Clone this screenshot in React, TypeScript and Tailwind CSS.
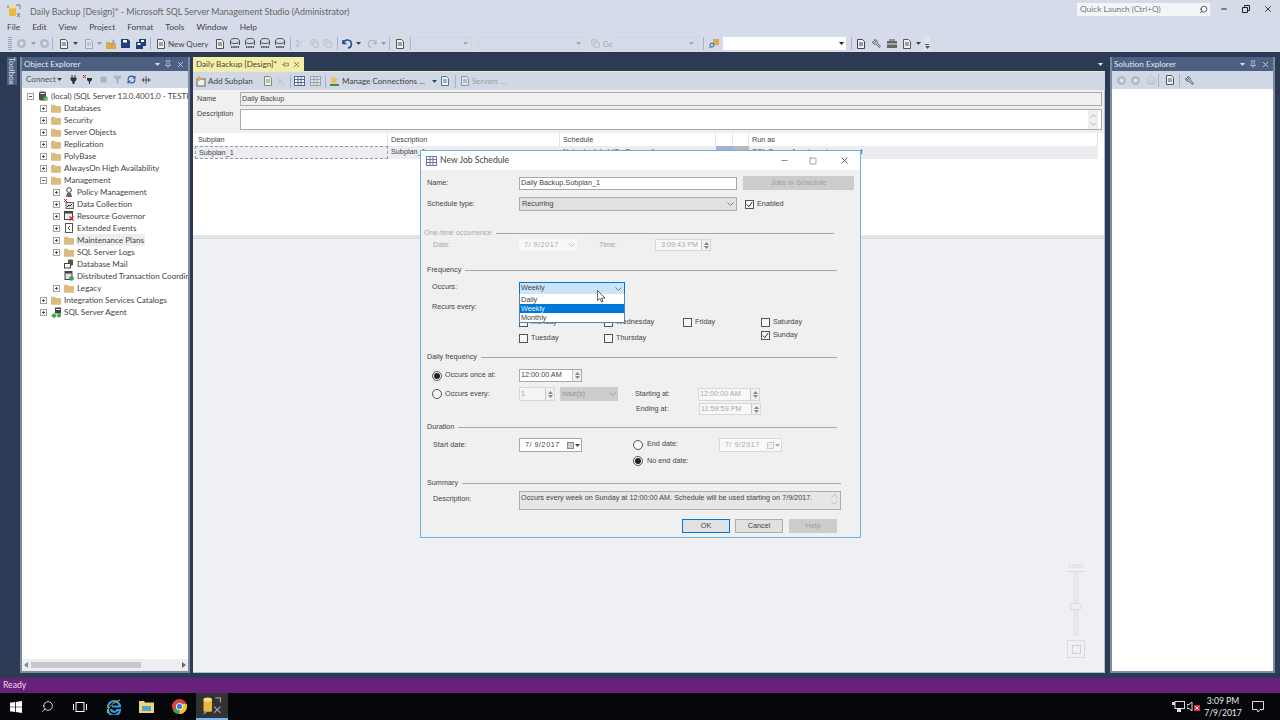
import type { ReactNode } from 'react'
import { Copy, Filter, Home, Minus, Pin, RefreshCw, Scissors, Search, Square, Wrench, X } from 'lucide-react'

// SSMS maintenance plan designer with the New Job Schedule dialog on top

function Caret({ className = '', color = '#444' }: { className?: string; color?: string }) {
  return (
    <svg width="5" height="3" viewBox="0 0 5 3" className={`shrink-0 ${className}`}>
      <path d="M0 0h5L2.5 3z" fill={color} />
    </svg>
  )
}

function Chevron({ className = '', color = '#777' }: { className?: string; color?: string }) {
  return (
    <svg width="7" height="4" viewBox="0 0 7 4" className={`shrink-0 ${className}`}>
      <path d="M.5.5l3 3 3-3" fill="none" stroke={color} />
    </svg>
  )
}

function Sep({ className = '' }: { className?: string }) {
  return <div className={`h-[13px] w-px shrink-0 bg-[#a9b2c6] ${className}`} />
}

function Circle({ className = '' }: { className?: string }) {
  return (
    <svg width="9" height="9" viewBox="0 0 9 9" className={`shrink-0 ${className}`}>
      <circle cx="4.5" cy="4.5" r="4.5" fill="#b4b9c4" />
      <circle cx="4.5" cy="4.5" r="2" fill="#dfe2ea" />
    </svg>
  )
}

function DocIcon({ className = '', color = '#555' }: { className?: string; color?: string }) {
  return (
    <svg width="10" height="10" viewBox="0 0 10 10" className={`shrink-0 ${className}`}>
      <path d="M1.5.5h5l2 2v7h-7z" fill="#eef0f4" stroke={color} />
      <path d="M3 4h4M3 6h4" stroke={color} />
    </svg>
  )
}

function DbQueryIcon({ className = '' }: { className?: string }) {
  return (
    <svg width="10" height="11" viewBox="0 0 10 11" className={`shrink-0 ${className}`}>
      <ellipse cx="5" cy="3" rx="4.5" ry="2.5" fill="none" stroke="#555" />
      <path d="M.5 3v4M9.5 3v4" stroke="#555" />
      <path d="M1 9h8" stroke="#555" strokeWidth="2" strokeDasharray="1.5 .7" />
    </svg>
  )
}

function FolderIcon() {
  return (
    <svg width="10" height="9" viewBox="0 0 10 9" className="shrink-0">
      <path d="M0 1.5A.7.7 0 0 1 .7.8h3l1 1.2h4.6a.7.7 0 0 1 .7.7V8a.7.7 0 0 1-.7.7H.7A.7.7 0 0 1 0 8z" fill="#dcbb7e" />
    </svg>
  )
}

function Toggle({ open }: { open?: boolean }) {
  return (
    <svg width="7" height="7" viewBox="0 0 7 7" className="shrink-0">
      <rect x=".5" y=".5" width="6" height="6" fill="#fff" stroke="#a0a0a0" />
      <path d="M2 3.5h3" stroke="#555" />
      {!open && <path d="M3.5 2v3" stroke="#555" />}
    </svg>
  )
}

function ServerIcon() {
  return (
    <svg width="10" height="10" viewBox="0 0 10 10" className="shrink-0">
      <rect x="1" y=".5" width="7" height="9" rx="1.5" fill="#4a4f55" />
      <rect x="2.5" y="2" width="4" height="1" fill="#fff" />
      <circle cx="7.5" cy="7.5" r="2.3" fill="#3aa648" />
      <path d="M6.5 7.5l1 1 1.2-1.5" stroke="#fff" strokeWidth=".7" fill="none" />
    </svg>
  )
}

function TreeGlyph({ kind }: { kind: string }) {
  if (kind === 'folder') return <FolderIcon />
  if (kind === 'policy')
    return (
      <svg width="10" height="11" viewBox="0 0 10 11" className="shrink-0">
        <circle cx="5" cy="3" r="2.4" fill="none" stroke="#444" />
        <path d="M3 6l-1 4h6L7 6z" fill="#666" />
      </svg>
    )
  if (kind === 'collect')
    return (
      <svg width="10" height="10" viewBox="0 0 10 10" className="shrink-0">
        <path d="M0 0l3 3M3 0L0 3" stroke="#d22" />
        <rect x="2" y="3.5" width="7.5" height="6" fill="#ddd" stroke="#666" />
        <path d="M3 8l2-2 1 1 2-2" stroke="#333" fill="none" />
      </svg>
    )
  if (kind === 'gov')
    return (
      <svg width="10" height="10" viewBox="0 0 10 10" className="shrink-0">
        <rect x=".5" y=".5" width="8" height="8" fill="#eee" stroke="#444" />
        <rect x=".5" y=".5" width="8" height="2" fill="#444" />
        <path d="M5.5 5.5l4 4M9.5 5.5l-4 4" stroke="#d22" strokeWidth="1.2" />
      </svg>
    )
  if (kind === 'events')
    return (
      <svg width="10" height="10" viewBox="0 0 10 10" className="shrink-0">
        <rect x="1.5" y=".5" width="7" height="9" fill="#fff" stroke="#555" />
        <path d="M6 3L4 5l2 2" stroke="#444" fill="none" />
      </svg>
    )
  if (kind === 'mail')
    return (
      <svg width="10" height="10" viewBox="0 0 10 10" className="shrink-0">
        <rect x="4" y=".5" width="5" height="6" rx="1" fill="#555" />
        <rect x=".5" y="4.5" width="6" height="4.5" fill="#fff" stroke="#444" />
      </svg>
    )
  if (kind === 'dtc')
    return (
      <svg width="10" height="10" viewBox="0 0 10 10" className="shrink-0">
        <rect x="1" y=".5" width="7" height="8" fill="#ddd" stroke="#444" />
        <rect x="1" y=".5" width="7" height="2" fill="#444" />
        <circle cx="7.5" cy="7.5" r="2.3" fill="#3aa648" />
      </svg>
    )
  if (kind === 'agent')
    return (
      <svg width="11" height="11" viewBox="0 0 11 11" className="shrink-0">
        <rect x="4" y=".5" width="6" height="6" fill="#444" />
        <rect x="5" y="2" width="4" height="1" fill="#fff" />
        <path d="M0 9l3-3 3 3-3 2z" fill="#4a4" />
        <circle cx="8" cy="8.5" r="2" fill="#3aa648" />
      </svg>
    )
  return <ServerIcon />
}

const TREE = [
  { label: '(local) (SQL Server 13.0.4001.0 - TESTPC', level: 0, icon: 'server', toggle: 'open' },
  { label: 'Databases', level: 1, icon: 'folder', toggle: 'closed' },
  { label: 'Security', level: 1, icon: 'folder', toggle: 'closed' },
  { label: 'Server Objects', level: 1, icon: 'folder', toggle: 'closed' },
  { label: 'Replication', level: 1, icon: 'folder', toggle: 'closed' },
  { label: 'PolyBase', level: 1, icon: 'folder', toggle: 'closed' },
  { label: 'AlwaysOn High Availability', level: 1, icon: 'folder', toggle: 'closed' },
  { label: 'Management', level: 1, icon: 'folder', toggle: 'open' },
  { label: 'Policy Management', level: 2, icon: 'policy', toggle: 'closed' },
  { label: 'Data Collection', level: 2, icon: 'collect', toggle: 'closed' },
  { label: 'Resource Governor', level: 2, icon: 'gov', toggle: 'closed' },
  { label: 'Extended Events', level: 2, icon: 'events', toggle: 'closed' },
  { label: 'Maintenance Plans', level: 2, icon: 'folder', toggle: 'closed', selected: true },
  { label: 'SQL Server Logs', level: 2, icon: 'folder', toggle: 'closed' },
  { label: 'Database Mail', level: 2, icon: 'mail', toggle: 'none' },
  { label: 'Distributed Transaction Coordinator', level: 2, icon: 'dtc', toggle: 'none' },
  { label: 'Legacy', level: 2, icon: 'folder', toggle: 'closed' },
  { label: 'Integration Services Catalogs', level: 1, icon: 'folder', toggle: 'closed' },
  { label: 'SQL Server Agent', level: 1, icon: 'agent', toggle: 'closed' },
]

const LEVEL_PAD = ['pl-[5px]', 'pl-[18px]', 'pl-[31px]']

function TitleBar() {
  return (
    <div className="flex h-[20px] shrink-0 items-center">
      <svg width="14" height="14" viewBox="0 0 14 14" className="mt-[2px] ml-[7px] shrink-0">
        <rect x="2" y="3" width="7" height="9" rx="1" fill="#e8b93c" />
        <ellipse cx="5.5" cy="3" rx="3.5" ry="1.5" fill="#f6dc8a" />
        <path d="M9 1h4v4M1 1v3M10 9l3 4M13 9l-3 4" stroke="#777" fill="none" />
      </svg>
      <span className="mt-[3px] ml-[9px] text-[8.85px] text-[#666]">
        Daily Backup [Design]* - Microsoft SQL Server Management Studio (Administrator)
      </span>
      <div className="mb-[2px] ml-auto flex h-[13px] w-[133px] items-center justify-between bg-[#f4f5f9] pr-[2px] pl-[3px]">
        <span className="text-[8.3px] text-[#777]">Quick Launch (Ctrl+Q)</span>
        <Search size={9} className="-scale-x-100 text-[#333]" />
      </div>
      <Minus size={8} strokeWidth={3} className="mb-[2px] ml-[10px] text-[#222]" />
      <svg width="8" height="8" viewBox="0 0 8 8" className="mb-[2px] ml-[14px]">
        <path d="M2.5 2V.5h5v5H6M.5 2.5h5v5h-5z" fill="none" stroke="#222" />
      </svg>
      <X size={10} className="mr-[7px] mb-[2px] ml-[13px] text-[#222]" />
    </div>
  )
}

function MenuBar() {
  const items = ['File', 'Edit', 'View', 'Project', 'Format', 'Tools', 'Window', 'Help']
  return (
    <div className="flex h-[15px] shrink-0 items-center gap-[12px] pl-[7px] text-[8.4px] text-[#444]">
      {items.map((m) => (
        <span key={m}>{m}</span>
      ))}
    </div>
  )
}

function MainToolbar() {
  return (
    <div className="flex h-[17px] shrink-0 items-center text-[8px] text-[#444]">
      <div className="ml-[8px] h-[13px] w-[4px] shrink-0 bg-[repeating-linear-gradient(0deg,#9aa3b5_0,#9aa3b5_1px,transparent_1px,transparent_2px)]" />
      <Circle className="ml-[5px]" />
      <Caret className="ml-[5px]" color="#999" />
      <Circle className="ml-[4px]" />
      <Sep className="ml-[3px]" />
      <DocIcon className="ml-[6px]" />
      <Caret className="ml-[4px]" />
      <DocIcon className="ml-[6px] opacity-40" />
      <Caret className="ml-[3px]" color="#999" />
      <svg width="10" height="10" viewBox="0 0 10 10" className="ml-[4px] shrink-0">
        <path d="M0 3h4l1 1h5v6H0z" fill="#d9a94e" />
        <path d="M6 .5l2 2-2 2" stroke="#2a6fb5" fill="none" />
      </svg>
      <svg width="9" height="9" viewBox="0 0 9 9" className="ml-[5px] shrink-0">
        <path d="M0 0h7l2 2v7H0z" fill="#1f3f7a" />
        <rect x="2" y="1" width="4" height="2.5" fill="#fff" />
      </svg>
      <svg width="10" height="10" viewBox="0 0 10 10" className="ml-[6px] shrink-0">
        <path d="M3 0h7v7H7v3H0V3h3z" fill="#1f3f7a" />
        <rect x="1.5" y="4" width="3" height="2" fill="#fff" />
        <rect x="5" y="1" width="3" height="2" fill="#fff" />
      </svg>
      <Sep className="ml-[4px]" />
      <DocIcon className="ml-[5px]" />
      <span className="ml-[2px] w-[40px] shrink-0 whitespace-nowrap">New Query</span>
      <DocIcon className="ml-[7px]" />
      <DbQueryIcon className="ml-[5px]" />
      <DbQueryIcon className="ml-[5px]" />
      <DbQueryIcon className="ml-[5px]" />
      <DbQueryIcon className="ml-[5px]" />
      <Sep className="ml-[5px]" />
      <Scissors size={9} className="ml-[4px] shrink-0 text-[#b0b5bf]" />
      <Copy size={9} className="ml-[6px] shrink-0 text-[#b0b5bf]" />
      <Copy size={9} className="ml-[4px] shrink-0 text-[#b0b5bf]" />
      <Sep className="ml-[5px]" />
      <svg width="11" height="10" viewBox="0 0 11 10" className="ml-[4px] shrink-0">
        <path d="M1 1v3.5h3.5M1.5 4.2A4 4 0 1 1 6 9" fill="none" stroke="#1f4f96" strokeWidth="1.6" />
      </svg>
      <Caret className="ml-[3px]" />
      <svg width="10" height="10" viewBox="0 0 11 10" className="ml-[6px] shrink-0">
        <path d="M10 1v3.5H6.5M9.5 4.2A4 4 0 1 0 5 9" fill="none" stroke="#b0b5bf" strokeWidth="1.4" />
      </svg>
      <Caret className="ml-[4px]" color="#999" />
      <Sep className="ml-[3px]" />
      <DocIcon className="ml-[5px]" />
      <Sep className="ml-[5px]" />
      <div className="ml-[3px] flex h-[13px] w-[58px] shrink-0 items-center justify-end border border-[#cfd5e2] pr-[3px]">
        <Caret color="#aaa" />
      </div>
      <div className="ml-[6px] flex h-[13px] w-[107px] shrink-0 items-center justify-end border border-[#cfd5e2] pr-[3px]">
        <Caret color="#aaa" />
      </div>
      <Copy size={9} className="ml-[6px] shrink-0 text-[#a8aeba]" />
      <span className="ml-[3px] w-[9px] shrink-0 overflow-hidden text-[#a0a5b0]">Go</span>
      <div className="flex h-[13px] w-[86px] shrink-0 items-center justify-end border border-[#cfd5e2] pr-[3px]">
        <Caret color="#aaa" />
      </div>
      <Sep className="ml-[5px]" />
      <svg width="10" height="10" viewBox="0 0 10 10" className="ml-[5px] shrink-0">
        <rect x="4" y="0" width="6" height="6" fill="#dfa94f" />
        <circle cx="3" cy="6" r="2" fill="none" stroke="#2a5fa5" />
        <path d="M1.5 7.5L0 9.5" stroke="#2a5fa5" />
      </svg>
      <div className="ml-[4px] flex h-[13px] w-[123px] shrink-0 items-center justify-end bg-white pr-[2px]">
        <Caret color="#222" />
      </div>
      <Sep className="ml-[5px]" />
      <DocIcon className="ml-[4px]" color="#4a3a6a" />
      <Wrench size={9} className="ml-[6px] shrink-0 -scale-x-100 text-[#333]" />
      <svg width="10" height="9" viewBox="0 0 10 9" className="ml-[6px] shrink-0">
        <rect x="0" y="2" width="10" height="7" fill="#666" />
        <rect x="3" y="0" width="4" height="2" fill="none" stroke="#666" />
        <rect x="0" y="4.5" width="10" height="1" fill="#ddd" />
      </svg>
      <DocIcon className="ml-[5px]" />
      <Caret className="ml-[4px]" />
      <div className="ml-[3px] flex h-[15px] w-[6px] shrink-0 flex-col items-center justify-end bg-[#e0e4ee] pb-[2px]">
        <div className="mb-px h-px w-[4px] bg-[#555]" />
        <Caret color="#555" />
      </div>
    </div>
  )
}

function PanelHeader({ title }: { title: string }) {
  return (
    <div className="flex h-[14px] shrink-0 items-center justify-between bg-[#4d6082] pr-[3px] pl-[2px] text-[8.2px] text-[#e6e9f0]">
      <span>{title}</span>
      <span className="flex items-center gap-[4px]">
        <Caret color="#dfe3ec" />
        <Pin size={8} className="text-[#dfe3ec]" />
        <X size={9} className="text-[#dfe3ec]" />
      </span>
    </div>
  )
}

function ObjectExplorer() {
  return (
    <div className="ml-[3px] flex w-[170px] shrink-0 flex-col border-x-2 border-b-2 border-[#7f8ba3] bg-white">
      <PanelHeader title="Object Explorer" />
      <div className="flex h-[17px] shrink-0 items-center bg-[#d0d7e5] pl-[4px] text-[8.1px] text-[#555]">
        <span className="w-[30px] shrink-0">Connect</span>
        <Caret className="ml-[1px]" />
        <svg width="7" height="9" viewBox="0 0 7 9" className="ml-[8px] shrink-0">
          <path d="M1 3h5v2L4 7v2H3V7L1 5zM2 0v3M5 0v3" fill="#333" stroke="#333" />
        </svg>
        <svg width="10" height="9" viewBox="0 0 10 9" className="ml-[6px] shrink-0">
          <path d="M4 3h5v2L7 7v2H6V7L4 5z" fill="#333" />
          <path d="M0 0l3 3M3 0L0 3" stroke="#c22" />
        </svg>
        <Square size={7} className="ml-[7px] shrink-0 fill-[#aeb3be] text-[#aeb3be]" />
        <Filter size={9} className="ml-[6px] shrink-0 fill-[#aeb3be] text-[#aeb3be]" />
        <RefreshCw size={9} strokeWidth={3} className="ml-[5px] shrink-0 text-[#2a5a9a]" />
        <svg width="10" height="8" viewBox="0 0 10 8" className="ml-[5px] shrink-0">
          <path d="M0 4h10M5 0v8M2.5 2v4M7.5 2v4" stroke="#555" />
        </svg>
      </div>
      <div className="min-h-0 flex-1 overflow-hidden pt-[2px] text-[8.1px] text-[#444]">
        {TREE.map((t) => (
          <div key={t.label} className={`flex h-[12px] items-center whitespace-nowrap ${LEVEL_PAD[t.level]}`}>
            {t.toggle === 'none' ? <span className="w-[7px] shrink-0" /> : <Toggle open={t.toggle === 'open'} />}
            <span className="ml-[4px] flex w-[10px] shrink-0 items-center">
              <TreeGlyph kind={t.icon} />
            </span>
            <span className={`ml-[2px] px-[1px] ${t.selected ? 'bg-[#eeeeee]' : ''}`}>{t.label}</span>
          </div>
        ))}
      </div>
      <div className="flex h-[12px] shrink-0 items-center justify-between bg-[#eeeef2] px-[2px]">
        <svg width="4" height="6" viewBox="0 0 4 6"><path d="M4 0v6L0 3z" fill="#888" /></svg>
        <div className="mr-[41px] ml-[3px] h-[6px] flex-1 bg-[#c8c8cc]" />
        <svg width="4" height="6" viewBox="0 0 4 6"><path d="M0 0v6l4-3z" fill="#666" /></svg>
      </div>
    </div>
  )
}

function GridCol({ w, children }: { w: string; children?: ReactNode }) {
  return <div className={`h-full shrink-0 overflow-hidden border-r border-[#e2e2e2] pl-[3px] ${w}`}>{children}</div>
}

function Designer() {
  return (
    <div className="ml-[3px] flex w-[912px] shrink-0 flex-col">
      <div className="flex h-[14px] shrink-0 items-center">
        <div className="flex h-full w-[111px] items-center bg-[#f5efa6] pl-[3px] text-[8.1px] whitespace-nowrap text-[#444]">
          <span className="w-[80px] shrink-0">Daily Backup [Design]*</span>
          <Pin size={7} className="ml-[6px] rotate-90 text-[#555]" />
          <X size={9} className="ml-[3px] text-[#555]" />
        </div>
        <Caret className="mr-[2px] ml-auto" color="#dfe3ec" />
      </div>
      <div className="h-[1px] shrink-0 bg-[#eeeac0]" />
      <div className="flex h-[18px] shrink-0 items-center bg-[#d0d7e5] pl-[3px] text-[8.1px] text-[#444]">
        <svg width="11" height="11" viewBox="0 0 11 11" className="shrink-0">
          <rect x="1" y="3" width="8" height="7" fill="#eee" stroke="#666" />
          <path d="M3 0v5M.5 2.500h5" stroke="#d9a94e" strokeWidth="1.5" />
        </svg>
        <span className="ml-[1px] w-[45px] shrink-0 whitespace-nowrap">Add Subplan</span>
        <DocIcon className="ml-[10px]" color="#7a8a6a" />
        <X size={11} className="ml-[2px] shrink-0 text-[#b0b5bf]" />
        <Sep className="ml-[4px]" />
        <svg width="11" height="10" viewBox="0 0 11 10" className="ml-[3px] shrink-0">
          <rect x=".5" y=".5" width="10" height="9" fill="#fff" stroke="#4a6aa0" />
          <path d="M.5 3.500h10M.5 6.500h10M4 .5v9M7 .5v9" stroke="#4a6aa0" />
        </svg>
        <svg width="11" height="10" viewBox="0 0 11 10" className="ml-[5px] shrink-0 opacity-40">
          <rect x=".5" y=".5" width="10" height="9" fill="#fff" stroke="#555" />
          <path d="M.5 3.500h10M.5 6.500h10M4 .5v9M7 .5v9" stroke="#555" />
        </svg>
        <Sep className="ml-[4px]" />
        <svg width="11" height="11" viewBox="0 0 11 11" className="ml-[3px] shrink-0">
          <path d="M1 8h9v2H1z" fill="#3a8a4a" />
          <path d="M5 0l1.500 2.500L9 3 7 5l.5 3-2.500-1.500L2.500 8 3 5 1 3l2.500-.5z" fill="#e6c050" />
        </svg>
        <span className="ml-[2px] w-[84px] shrink-0 whitespace-nowrap">Manage Connections ...</span>
        <Caret className="ml-[6px]" />
        <DocIcon className="ml-[3px]" color="#4a7aa0" />
        <Sep className="ml-[5px]" />
        <DocIcon className="ml-[4px] opacity-50" />
        <span className="ml-[2px] text-[#9a9fa8]">Servers ...</span>
      </div>
      <div className="flex min-h-0 flex-1 flex-col border-r border-b border-[#a8c4cc] bg-white">
        <div className="shrink-0 bg-[#f0f0f0] pt-[2px] pr-[2px] pb-[3px] pl-[4px] text-[7.25px] text-[#444] [font-family:'Liberation_Sans',sans-serif]">
          <div className="flex h-[14px] items-center">
            <span className="w-[43px] shrink-0">Name</span>
            <div className="flex h-full flex-1 items-center border border-[#aaaaaa] pl-[1px]">Daily Backup</div>
          </div>
          <div className="mt-[3px] flex h-[21px]">
            <span className="w-[43px] shrink-0">Description</span>
            <div className="flex h-full flex-1 items-center justify-end border border-[#aaaaaa] bg-white pr-[3px]">
              <div className="flex h-full w-[10px] flex-col items-center justify-center gap-[4px] bg-[#eeeeee]">
                <Chevron className="rotate-180" color="#bbb" />
                <Chevron color="#bbb" />
              </div>
            </div>
          </div>
        </div>
        <div className="flex h-[13px] shrink-0 pl-[2px] text-[7.25px] leading-[13px] text-[#444] [font-family:'Liberation_Sans',sans-serif]">
          <GridCol w="w-[193px]">Subplan</GridCol>
          <GridCol w="w-[172px]">Description</GridCol>
          <GridCol w="w-[156px]">Schedule</GridCol>
          <GridCol w="w-[17px]" />
          <GridCol w="w-[16px]" />
          <GridCol w="w-[349px]">Run as</GridCol>
        </div>
        <div className="flex h-[13px] w-[905px] shrink-0 bg-[#ebedf0] pl-[2px] text-[7.25px] leading-[11px] text-[#444] [font-family:'Liberation_Sans',sans-serif]">
          <div className="h-full w-[193px] shrink-0 border border-dashed border-[#9a9a9a] pl-[3px]">Subplan_1</div>
          <div className="h-full w-[172px] shrink-0 pl-[3px]">Subplan_1</div>
          <div className="h-full w-[156px] shrink-0 pl-[3px] whitespace-nowrap">Not scheduled (On Demand)</div>
          <div className="h-full w-[17px] shrink-0 bg-[#9fb4d4]" />
          <div className="h-full w-[16px] shrink-0 bg-[#b8b8bc]" />
          <div className="h-full pl-[3px] whitespace-nowrap">SQL Server Agent service account</div>
        </div>
        <div className="min-h-0 flex-1" />
        <div className="h-[4px] shrink-0 border-b border-[#cde0e4] bg-[#e4e4e4]" />
        <div className="flex h-[433px] shrink-0 flex-col items-end bg-[#eef0f3] pt-[323px] pr-[19px]">
          <div className="flex w-[18px] flex-col items-center text-[6px] text-[#d4d4d7] [font-family:'Liberation_Sans',sans-serif]">
            <span>100%</span>
            <div className="h-px w-full bg-[#dcdcdf]" />
            <div className="relative flex h-[64px] w-[6px] justify-center bg-[#e6e7ea]">
              <div className="absolute top-[31px] left-[-3px] h-[7px] w-[12px] rounded-r-full border border-[#d8d8dc] bg-[#eef0f3]" />
            </div>
            <div className="mt-[4px] flex h-[18px] w-[18px] items-center justify-center border border-[#dcdce0]">
              <div className="h-[9px] w-[9px] border border-[#d0d0d4]" />
            </div>
          </div>
        </div>
      </div>
    </div>
  )
}

function SolutionExplorer() {
  return (
    <div className="ml-[5px] flex w-[165px] shrink-0 flex-col border-x-2 border-b-2 border-[#7f8ba3] bg-white">
      <PanelHeader title="Solution Explorer" />
      <div className="flex h-[18px] shrink-0 items-center bg-[#d0d7e5] pl-[5px]">
        <Circle />
        <Circle className="ml-[5px]" />
        <Home size={10} className="ml-[6px] shrink-0 text-[#b4b9c4]" />
        <Sep className="ml-[2px]" />
        <DocIcon className="ml-[6px]" />
        <Sep className="ml-[4px]" />
        <Wrench size={9} className="ml-[5px] -scale-x-100 text-[#333]" />
      </div>
    </div>
  )
}

function Spin() {
  return (
    <div className="flex h-full w-[9px] shrink-0 flex-col items-center justify-center gap-[1px] border-l border-[#c8c8c8] bg-[#f0f0f0]">
      <Caret className="rotate-180" color="#888" />
      <Caret color="#888" />
    </div>
  )
}

function CheckBox({ checked }: { checked?: boolean }) {
  return (
    <div className="flex h-[9px] w-[9px] shrink-0 items-center justify-center border border-[#555] bg-[#f8f8f8]">
      {checked && (
        <svg width="7" height="7" viewBox="0 0 7 7">
          <path d="M.8 3.500l2 2.200L6.200 1" fill="none" stroke="#333" />
        </svg>
      )}
    </div>
  )
}

function Radio({ checked }: { checked?: boolean }) {
  return (
    <div className="flex h-[10px] w-[10px] shrink-0 items-center justify-center rounded-full border border-[#555] bg-[#f8f8f8]">
      {checked && <div className="h-[6px] w-[6px] rounded-full bg-[#222]" />}
    </div>
  )
}

function GroupTitle({ title, className = '', muted, end = 'mr-[23px]' }: { title: string; className?: string; muted?: boolean; end?: string }) {
  return (
    <div className={`flex h-[12px] items-center ${end} ${className}`}>
      <span className={muted ? 'text-[#a8a8a8]' : ''}>{title}</span>
      <div className="ml-[4px] h-px flex-1 bg-[#a8a8a8]" />
    </div>
  )
}

function Day({ label, checked, className = '' }: { label: string; checked?: boolean; className?: string }) {
  return (
    <div className={`flex items-center ${className}`}>
      <CheckBox checked={checked} />
      <span className="ml-[3px]">{label}</span>
    </div>
  )
}

function JobScheduleDialog() {
  return (
    <div className="absolute top-[150px] left-[420px] flex h-[388px] w-[441px] flex-col border border-[#6fb2d8] bg-[#f0f0f0] text-[7.25px] whitespace-nowrap text-[#444] [font-family:'Liberation_Sans',sans-serif]">
      <div className="flex h-[19px] shrink-0 items-center bg-white pl-[5px] text-[8.6px] text-[#444] [font-family:'Lato',sans-serif]">
        <svg width="11" height="10" viewBox="0 0 11 10" className="shrink-0">
          <rect x=".5" y=".5" width="10" height="9" fill="#fff" stroke="#6a7aa0" />
          <path d="M.5 3.500h10M.5 6.500h10M4 .5v9M7 .5v9" stroke="#6a7aa0" />
        </svg>
        <span className="ml-[3px]">New Job Schedule</span>
        <Minus size={9} className="ml-auto text-[#666]" />
        <Square size={8} className="ml-[20px] text-[#777]" />
        <X size={11} className="mr-[10px] ml-[22px] text-[#555]" />
      </div>

      <div className="mt-[6px] flex h-[14px] items-center pl-[6px]">
        <span className="w-[92px] shrink-0">Name:</span>
        <div className="flex h-[13px] w-[218px] items-center border border-[#a8a8a8] bg-white pl-[1px]">Daily Backup.Subplan_1</div>
        <div className="ml-[6px] flex h-full w-[111px] items-center justify-center bg-[#cccccc] text-[#a0a0a0]">Jobs in Schedule</div>
      </div>

      <div className="mt-[7px] flex h-[14px] items-center pl-[6px]">
        <span className="w-[92px] shrink-0">Schedule type:</span>
        <div className="flex h-full w-[218px] items-center justify-between border border-[#adadad] bg-[#e1e1e1] px-[2px]">
          <span>Recurring</span>
          <Chevron />
        </div>
        <div className="ml-[8px]">
          <Day label="Enabled" checked />
        </div>
      </div>

      <GroupTitle title="One-time occurrence" muted end="mr-[26px]" className="mt-[16px] pl-[3px]" />
      <div className="flex h-[12px] items-center pl-[12px] text-[#a8a8a8]">
        <span className="w-[86px] shrink-0">Date:</span>
        <div className="flex h-[12px] w-[58px] items-center justify-between bg-[#f8f8f8] pr-[2px] pl-[5px]">
          <span className="tracking-[0.5px]">7/ 9/2017</span>
          <Chevron color="#bbb" />
        </div>
        <span className="ml-[22px] w-[56px] shrink-0">Time:</span>
        <div className="flex h-[12px] w-[56px] items-center justify-between border border-[#d8d8d8] bg-[#f8f8f8] pl-[5px]">
          <span>3:09:43 PM</span>
          <Spin />
        </div>
      </div>

      <GroupTitle title="Frequency" className="mt-[13px] pl-[6px]" />

      <div className="mt-[6px] flex h-[13px] items-center pl-[11px]">
        <span className="-mt-[3px] w-[87px] shrink-0">Occurs:</span>
        <div className="relative flex h-full w-[106px] items-center justify-between border border-[#0078d7] bg-[#cce4f7] pr-[2px] pl-[1px]">
          <span>Weekly</span>
          <Chevron />
          <div className="absolute top-full -left-px flex w-[106px] flex-col border border-t-0 border-[#4f86b5] bg-white pt-[1px] leading-[10px]">
            <span className="h-[9px] pl-[1px]">Daily</span>
            <span className="h-[9px] bg-[#0078d7] pl-[1px] text-[#eaf4fc]">Weekly</span>
            <span className="h-[9px] pl-[1px]">Monthly</span>
          </div>
          <svg width="9" height="13" viewBox="0 0 9 13" className="absolute top-[7px] left-[77px] z-10">
            <path d="M.5.5v10l2.500-2 1.500 3.500 1.500-.6L4.500 8H8z" fill="#fff" stroke="#222" strokeWidth=".7" />
          </svg>
        </div>
      </div>
      <div className="mt-[6px] h-[12px] pl-[11px] leading-[12px]">Recurs every:</div>

      <div className="mt-[3px] flex h-[12px] items-center pl-[98px]">
        <Day label="Monday" className="w-[85px]" />
        <Day label="Wednesday" className="w-[79px]" />
        <Day label="Friday" className="w-[78px]" />
        <Day label="Saturday" />
      </div>
      <div className="mt-px flex h-[16px] items-start pl-[98px]">
        <Day label="Tuesday" className="mt-[4px] w-[85px]" />
        <Day label="Thursday" className="mt-[4px] w-[157px]" />
        <Day label="Sunday" className="mt-px" checked />
      </div>

      <GroupTitle title="Daily frequency" className="mt-[6px] pl-[6px]" />

      <div className="mt-[6px] flex h-[13px] items-center pl-[11px]">
        <Radio checked />
        <span className="ml-[3px] w-[74px] shrink-0">Occurs once at:</span>
        <div className="flex h-full w-[63px] items-center justify-between border border-[#a8a8a8] bg-white pl-[1px]">
          <span>12:00:00 AM</span>
          <Spin />
        </div>
      </div>
      <div className="mt-[5px] flex h-[14px] items-center pl-[11px]">
        <Radio />
        <span className="ml-[3px] w-[74px] shrink-0">Occurs every:</span>
        <div className="flex h-full w-[36px] items-center justify-between border border-[#d8d8d8] bg-[#f4f4f4] pl-[1px] text-[#a8a8a8]">
          <span>1</span>
          <Spin />
        </div>
        <div className="ml-[5px] flex h-full w-[58px] items-center justify-between bg-[#cccccc] px-[2px] text-[#909090]">
          <span>hour(s)</span>
          <Chevron color="#999" />
        </div>
        <span className="ml-[17px] w-[63px] shrink-0">Starting at:</span>
        <div className="flex h-[13px] w-[62px] items-center justify-between border border-[#d8d8d8] bg-[#f8f8f8] pl-[1px] text-[#a8a8a8]">
          <span>12:00:00 AM</span>
          <Spin />
        </div>
      </div>
      <div className="mt-[2px] flex h-[12px] items-center pl-[215px]">
        <span className="w-[63px] shrink-0">Ending at:</span>
        <div className="flex h-full w-[62px] items-center justify-between border border-[#d8d8d8] bg-[#f8f8f8] pl-[1px] text-[#a8a8a8]">
          <span>11:59:59 PM</span>
          <Spin />
        </div>
      </div>

      <GroupTitle title="Duration" className="mt-[6px] pl-[6px]" />

      <div className="mt-[5px] flex h-[14px] items-center pl-[12px]">
        <span className="w-[86px] shrink-0">Start date:</span>
        <div className="flex h-full w-[63px] items-center justify-between border border-[#a8a8a8] bg-white pr-[1px] pl-[5px]">
          <span className="tracking-[0.5px]">7/ 9/2017</span>
          <span className="flex items-center gap-[1px]">
            <span className="h-[7px] w-[7px] border border-[#888] bg-[#ccc]" />
            <Caret />
          </span>
        </div>
        <div className="ml-[51px]">
          <Radio />
        </div>
        <span className="-mt-[2px] ml-[4px] w-[72px] shrink-0">End date:</span>
        <div className="flex h-full w-[63px] items-center justify-between border border-[#d8d8d8] bg-[#f8f8f8] pr-[1px] pl-[5px] text-[#a8a8a8]">
          <span className="tracking-[0.5px]">7/ 9/2017</span>
          <span className="flex items-center gap-[1px]">
            <span className="h-[7px] w-[7px] border border-[#ccc] bg-[#eee]" />
            <Caret color="#aaa" />
          </span>
        </div>
      </div>
      <div className="mt-[3px] flex h-[12px] items-center pl-[212px]">
        <Radio checked />
        <span className="ml-[4px]">No end date:</span>
      </div>

      <GroupTitle title="Summary" end="mr-[19px]" className="mt-[10px] pl-[6px]" />

      <div className="mt-[2px] flex h-[19px] items-center pl-[12px]">
        <span className="-mt-[2px] w-[86px] shrink-0">Description:</span>
        <div className="flex h-full w-[322px] justify-between border border-[#adadad] bg-[#e6e6e6] pt-[1px] pr-[2px] pl-[1px]">
          <span>Occurs every week on Sunday at 12:00:00 AM. Schedule will be used starting on 7/9/2017.</span>
          <div className="flex flex-col items-center gap-[3px] pt-[1px]">
            <Chevron className="rotate-180" color="#bbb" />
            <Chevron color="#bbb" />
          </div>
        </div>
      </div>

      <div className="mt-[9px] flex h-[14px] items-center pl-[261px]">
        <div className="flex h-full w-[48px] items-center justify-center border border-[#0078d7] bg-[#e1e1e1]">OK</div>
        <div className="ml-[5px] flex h-full w-[48px] items-center justify-center border border-[#adadad] bg-[#e1e1e1]">Cancel</div>
        <div className="ml-[6px] flex h-full w-[48px] items-center justify-center bg-[#cccccc] text-[#a0a0a0]">Help</div>
      </div>
    </div>
  )
}

function Taskbar() {
  return (
    <div className="flex h-[27px] shrink-0 items-center bg-[#06070b] text-white">
      <svg width="12" height="12" viewBox="0 0 12 12" className="ml-[10px] shrink-0">
        <path d="M0 1.700L5 1v4.700H0zM5.800.9L12 0v5.700H5.800zM0 6.300h5V11l-5-.7zM5.800 6.300H12V12l-6.200-.9z" fill="#fff" />
      </svg>
      <Search size={13} strokeWidth={1.5} className="ml-[19px] shrink-0 -scale-x-100 text-white" />
      <svg width="14" height="10" viewBox="0 0 14 10" className="ml-[19px] shrink-0">
        <rect x="3" y=".5" width="8" height="9" fill="none" stroke="#fff" />
        <path d="M.5 2v6M13.500 2v6" stroke="#fff" />
      </svg>
      <svg width="16" height="16" viewBox="0 0 16 16" className="ml-[19px] shrink-0">
        <path d="M2 9a6 6 0 0 1 12-1.500H6M5 10a3.500 3.500 0 0 0 6.500 1H14a6 6 0 0 1-12-1" fill="none" stroke="#2f9fe0" strokeWidth="2.200" />
        <path d="M1.500 14C0 11 7 3 14 1" fill="none" stroke="#e8b030" strokeWidth="1" />
      </svg>
      <svg width="15" height="13" viewBox="0 0 15 13" className="ml-[17px] shrink-0">
        <path d="M0 1h5l1 1.500h9V13H0z" fill="#f1d27a" />
        <rect x="3" y="6" width="9" height="5" fill="#4fa7c9" />
      </svg>
      <svg width="15" height="15" viewBox="0 0 15 15" className="ml-[18px] shrink-0">
        <circle cx="7.500" cy="7.500" r="7.500" fill="#d9453a" />
        <path d="M7.500 7.500L1 11.200A7.500 7.500 0 0 0 7.500 15z" fill="#3ba55a" />
        <path d="M7.500 7.500V15A7.500 7.500 0 0 0 14.500 5H7.500z" fill="#f2c230" />
        <circle cx="7.500" cy="7.500" r="3.500" fill="#fff" />
        <circle cx="7.500" cy="7.500" r="2.700" fill="#3f7fe0" />
      </svg>
      <div className="ml-[9px] flex h-full w-[32px] shrink-0 items-center justify-center border-b-2 border-[#76b9ed] bg-[#333333]">
        <svg width="21" height="18" viewBox="0 0 19 17">
          <rect x="1" y="2" width="8" height="12" rx="1" fill="#e8b93c" />
          <ellipse cx="5" cy="2.500" rx="4" ry="2" fill="#f6dc8a" />
          <path d="M12 1h5v4M1 16l4-3M11 9l6 6M17 9l-6 6" stroke="#aab" fill="none" />
        </svg>
      </div>
      <svg width="13" height="11" viewBox="0 0 13 11" className="ml-auto shrink-0">
        <rect x="3" y=".5" width="9.500" height="7" fill="none" stroke="#ddd" />
        <rect x="0" y="1" width="3" height="3" fill="#ddd" />
        <rect x="5" y="8" width="4" height="3" fill="#ddd" />
      </svg>
      <svg width="13" height="11" viewBox="0 0 13 11" className="ml-[2px] shrink-0">
        <path d="M0 3.500h2L5 1v9L2 7.500H0z" fill="none" stroke="#ddd" />
        <rect x="7" y="4" width="6" height="6" fill="#d9323f" />
        <path d="M8.500 5.500l3 3M11.500 5.500l-3 3" stroke="#fff" />
      </svg>
      <div className="ml-[3px] flex w-[40px] shrink-0 flex-col items-center text-[8.6px] leading-[12px] text-[#e8e8e8]">
        <span>3:09 PM</span>
        <span>7/9/2017</span>
      </div>
      <svg width="12" height="12" viewBox="0 0 12 12" className="mr-[16px] ml-[9px] shrink-0">
        <path d="M.5.5h11v8H8L6 11 5 8.500H.5z" fill="none" stroke="#ddd" />
      </svg>
    </div>
  )
}

export default function App() {
  return (
    <div className="relative flex h-[720px] w-[1280px] flex-col overflow-hidden bg-[#d6dbe9] [font-family:'Lato',sans-serif]">
      <TitleBar />
      <MenuBar />
      <MainToolbar />
      <div className="flex min-h-0 flex-1 bg-[#2d3a54] pt-[5px] pb-[5px]">
        <div className="ml-[7px] h-[28px] w-[10px] shrink-0 bg-[#4d6082]">
          <div className="origin-top-left translate-x-[10px] rotate-90 text-[8px] leading-[10px] whitespace-nowrap text-[#dfe3ec]">Toolbox</div>
        </div>
        <ObjectExplorer />
        <Designer />
        <SolutionExplorer />
      </div>
      <div className="flex h-[15px] shrink-0 items-center bg-[#68217a] pl-[3px] text-[8.6px] text-[#e8dcec]">Ready</div>
      <Taskbar />
      <JobScheduleDialog />
    </div>
  )
}
